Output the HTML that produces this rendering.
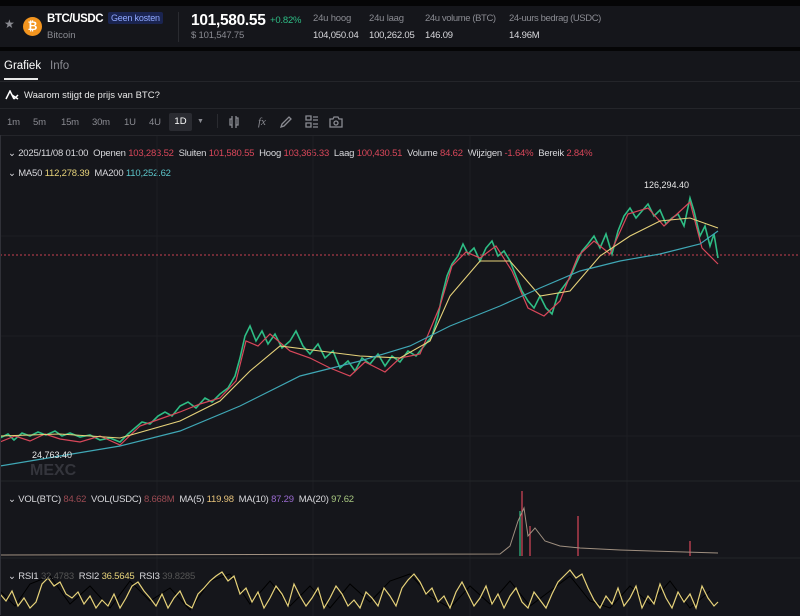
<!DOCTYPE html><html><head><style>
*{margin:0;padding:0;box-sizing:border-box}
body{width:800px;height:616px;overflow:hidden;background:#15161b;font-family:"Liberation Sans",sans-serif;color:#d8d8dc;position:relative;font-size:11px}
.a{position:absolute;white-space:nowrap}
.g{color:#8a8b92}.r{color:#d9475a}.gr{color:#2ebd85}
.s{font-size:9.5px;letter-spacing:-0.2px}
</style></head><body>
<div class="a" style="left:0;top:0;width:800px;height:6px;background:#050506"></div>
<div class="a" style="left:0;top:47px;width:800px;height:4px;background:#050506"></div>
<div class="a g" style="left:4px;top:17px;font-size:12px">★</div>
<div class="a" style="left:23px;top:17px;width:19px;height:19px;border-radius:50%;background:#f3951f;color:#fff;font-weight:bold;text-align:center;line-height:19px;font-size:12px">₿</div>
<div class="a" style="left:47px;top:13px;font-size:11.5px;font-weight:bold;color:#fff;letter-spacing:-0.4px">BTC/USDC</div>
<div class="a" style="left:108px;top:12px;background:#1a2450;color:#8fa8ff;padding:1px 3px;font-size:9px;border-radius:2px;letter-spacing:-0.2px">Geen kosten</div>
<div class="a g" style="left:47px;top:30px;font-size:9.5px">Bitcoin</div>
<div class="a" style="left:178px;top:12px;width:1px;height:30px;background:#2a2b30"></div>
<div class="a" style="left:191px;top:12px;font-size:15.5px;font-weight:bold;color:#fff;letter-spacing:-0.3px">101,580.55</div>
<div class="a gr s" style="left:270px;top:15px">+0.82%</div>
<div class="a g s" style="left:191px;top:30px">$ 101,547.75</div>
<div class="a g s" style="left:313px;top:13px">24u hoog</div><div class="a s" style="left:313px;top:30px">104,050.04</div>
<div class="a g s" style="left:369px;top:13px">24u laag</div><div class="a s" style="left:369px;top:30px">100,262.05</div>
<div class="a g s" style="left:425px;top:13px;letter-spacing:-0.4px">24u volume (BTC)</div><div class="a s" style="left:425px;top:30px">146.09</div>
<div class="a g s" style="left:509px;top:13px;letter-spacing:-0.4px">24-uurs bedrag (USDC)</div><div class="a s" style="left:509px;top:30px">14.96M</div>
<div class="a" style="left:4px;top:60px;font-size:11.5px;color:#fff">Grafiek</div>
<div class="a g" style="left:50px;top:60px;font-size:11.5px">Info</div>
<div class="a" style="left:4px;top:78px;width:34px;height:2px;background:#e8e8e8"></div>
<div class="a" style="left:0;top:81px;width:800px;height:1px;background:#24252a"></div>
<svg class="a" style="left:5px;top:90px" width="14" height="10"><path d="M1 9 L5 1 L9 9 M7 5 L13 9 M9 9 L13 5" stroke="#fff" stroke-width="1.5" fill="none"/></svg>
<div class="a" style="left:24px;top:90px;font-size:9.5px;color:#e8e8e8">Waarom stijgt de prijs van BTC?</div>
<div class="a" style="left:0;top:108px;width:800px;height:1px;background:#24252a"></div>
<div class="a g s" style="left:7px;top:117px">1m</div>
<div class="a g s" style="left:33px;top:117px">5m</div>
<div class="a g s" style="left:61px;top:117px">15m</div>
<div class="a g s" style="left:92px;top:117px">30m</div>
<div class="a g s" style="left:124px;top:117px">1U</div>
<div class="a g s" style="left:149px;top:117px">4U</div>
<div class="a" style="left:169px;top:113px;width:23px;height:18px;background:#2a2b31;border-radius:2px;color:#fff;font-size:9.5px;text-align:center;line-height:18px">1D</div>
<div class="a g" style="left:197px;top:118px;font-size:7px">▼</div>
<div class="a" style="left:217px;top:114px;width:1px;height:14px;background:#2a2b30"></div>
<svg class="a" style="left:228px;top:114px" width="130" height="16" fill="none" stroke="#8a8b92" stroke-width="1.3">
<path d="M4 2v12M4 5h-2v6h2M8 2v12M8 4h2v7h-2"/>
<text x="30" y="11" fill="#8a8b92" stroke="none" font-size="11" font-style="italic" font-family="Liberation Serif">fx</text>
<path d="M53 13l1-3 7-7 2 2-7 7z"/>
<path d="M78 2h5v4h-5zM78 9h5v4h-5zM85 3h5M85 6h5M85 10h5M85 13h5"/>
<path d="M102 5h3l1-2h4l1 2h3v8h-12z"/><circle cx="108" cy="9" r="2"/>
</svg>
<div class="a" style="left:0;top:135px;width:800px;height:1px;background:#24252a"></div>
<div class="a s" style="left:8px;top:148px"><span>⌄</span> 2025/11/08 01:00 &nbsp;Openen <span class="r">103,283.52</span> &nbsp;Sluiten <span class="r">101,580.55</span> &nbsp;Hoog <span class="r">103,365.33</span> &nbsp;Laag <span class="r">100,430.51</span> &nbsp;Volume <span class="r">84.62</span> &nbsp;Wijzigen <span class="r">-1.64%</span> &nbsp;Bereik <span class="r">2.84%</span></div>
<div class="a s" style="left:8px;top:168px">⌄ MA50 <span style="color:#e6d27a">112,278.39</span> &nbsp;MA200 <span style="color:#5cc4c9">110,252.62</span></div>
<svg class="a" style="left:0;top:136px" width="800" height="480">
<g stroke="#1d1e23"><line x1="0" y1="100" x2="800" y2="100"/><line x1="0" y1="200" x2="800" y2="200"/><line x1="0" y1="300" x2="800" y2="300"/><line x1="157" y1="0" x2="157" y2="480"/><line x1="313" y1="0" x2="313" y2="480"/><line x1="470" y1="0" x2="470" y2="480"/><line x1="627" y1="0" x2="627" y2="480"/></g>
<line x1="0" y1="119" x2="800" y2="119" stroke="#c84050" stroke-dasharray="2,2"/>
<polyline fill="none" stroke="#2ebd85" stroke-width="1.6" points="0,302 8,298 14,304 22,297 30,300 38,296 46,299 55,295 62,300 70,297 80,301 90,299 100,304 110,302 120,306 128,298 135,292 142,286 150,288 158,280 165,276 172,280 180,270 188,266 196,272 205,262 212,266 220,258 228,252 235,240 240,222 245,200 250,190 256,205 262,195 268,208 275,198 282,212 290,205 296,195 303,210 310,218 318,208 325,222 333,215 340,232 348,225 355,235 362,222 370,228 378,218 385,230 392,220 400,226 408,215 416,220 424,210 432,200 438,180 442,160 447,140 452,128 458,120 463,108 468,118 474,112 480,125 486,112 492,105 498,120 504,115 510,125 516,140 522,155 528,165 534,172 540,160 546,172 552,178 558,158 564,150 570,142 576,128 582,115 588,108 594,100 600,112 606,98 612,118 618,95 624,80 630,72 636,82 642,75 648,68 654,80 660,74 666,88 672,82 678,78 684,90 690,62 694,75 700,100 705,90 710,110 714,98 718,122"/>
<polyline fill="none" stroke="#d9475a" stroke-width="1.2" points="0,306 15,300 30,305 45,298 60,303 80,306 100,300 120,309 140,290 160,283 180,276 200,268 220,262 236,245 246,205 258,210 270,198 290,215 310,222 330,232 350,240 365,226 385,236 400,222 420,218 440,170 452,130 466,116 480,122 496,110 512,135 528,172 544,180 560,165 578,120 594,105 610,118 628,78 648,72 664,90 690,66 702,112 718,128"/>
<polyline fill="none" stroke="#e6d27a" stroke-width="1.1" points="0,300 60,298 120,302 180,285 220,265 250,235 280,210 320,215 360,220 400,222 430,205 450,160 480,125 510,125 540,160 570,155 600,120 630,100 660,85 690,82 718,92"/>
<polyline fill="none" stroke="#3fa7b5" stroke-width="1.2" points="0,330 60,320 120,310 180,295 240,270 300,240 360,225 410,210 450,190 500,170 540,152 580,135 620,125 660,118 700,108 718,95"/>
<text x="644" y="52" fill="#e8e8e8" font-size="9" font-family="Liberation Sans">126,294.40</text>
<text x="32" y="322" fill="#e8e8e8" font-size="9" font-family="Liberation Sans">24,763.40</text>
<text x="30" y="339" fill="#34353c" font-size="16" font-weight="bold" font-family="Liberation Sans">MEXC</text>
<line x1="0" y1="345" x2="800" y2="345" stroke="#24252a"/>
<g stroke-width="1.2"><line x1="522" y1="420" x2="522" y2="355" stroke="#d9475a"/><line x1="520" y1="420" x2="520" y2="375" stroke="#2ebd85"/><line x1="530" y1="420" x2="530" y2="390" stroke="#d9475a"/><line x1="578" y1="420" x2="578" y2="380" stroke="#d9475a"/><line x1="690" y1="420" x2="690" y2="405" stroke="#d9475a"/></g>
<polyline fill="none" stroke="#a09080" stroke-width="1" points="0,419 500,418 510,410 518,385 524,372 528,400 535,392 545,405 560,410 580,412 620,414 718,417"/>
<line x1="0" y1="422" x2="800" y2="422" stroke="#24252a"/>
<polyline fill="none" stroke="#000" stroke-width="1" points="0,455 15,470 30,448 50,440 70,468 90,450 110,472 130,445 150,465 170,452 190,474 210,445 230,438 250,468 270,445 290,470 310,450 330,472 350,448 370,466 390,445 410,438 430,460 450,472 470,450 490,468 510,445 530,470 550,455 570,440 590,465 610,472 630,450 650,468 670,445 690,472 710,455"/>
<polyline fill="none" stroke="#e6d27a" stroke-width="1.2" points="0,458 6,465 12,455 18,470 24,462 30,472 36,466 42,448 48,442 54,450 60,446 66,458 72,462 78,456 84,468 90,460 96,472 102,464 108,470 114,458 120,472 126,462 132,450 138,446 144,455 150,462 156,470 162,458 168,472 174,462 180,455 186,468 192,472 198,458 204,452 210,445 216,440 222,436 228,445 234,440 240,458 246,452 252,466 258,456 264,472 270,462 276,450 282,458 288,470 294,448 300,460 306,470 312,462 318,452 324,472 330,462 336,450 342,458 348,470 354,464 360,472 366,456 372,462 378,470 384,452 390,460 396,470 402,452 408,444 414,438 420,446 426,458 432,452 438,466 444,460 450,472 456,456 462,446 468,458 474,470 480,462 486,450 492,468 498,458 504,472 510,460 516,452 522,466 528,472 534,456 540,464 546,472 552,458 558,446 564,440 570,434 576,442 582,438 588,452 594,464 600,472 606,460 612,468 618,452 624,470 630,462 636,450 642,472 648,460 654,468 660,448 666,462 672,472 678,456 684,466 690,458 696,472 702,450 708,462 714,470 718,466"/>
</svg>
<div class="a" style="left:0;top:135px;width:1px;height:480px;background:#303138"></div>
<div class="a s" style="left:8px;top:494px">⌄ VOL(BTC) <span style="color:#9a4a52">84.62</span> &nbsp;VOL(USDC) <span style="color:#9a4a52">8.668M</span> &nbsp;MA(5) <span style="color:#e6c27a">119.98</span> &nbsp;MA(10) <span style="color:#9a6ad0">87.29</span> &nbsp;MA(20) <span style="color:#a8c880">97.62</span></div>
<div class="a s" style="left:8px;top:571px">⌄ RSI1 <span style="color:#555">32.4783</span> &nbsp;RSI2 <span style="color:#e6d27a">36.5645</span> &nbsp;RSI3 <span style="color:#555">39.8285</span></div>
</body></html>
